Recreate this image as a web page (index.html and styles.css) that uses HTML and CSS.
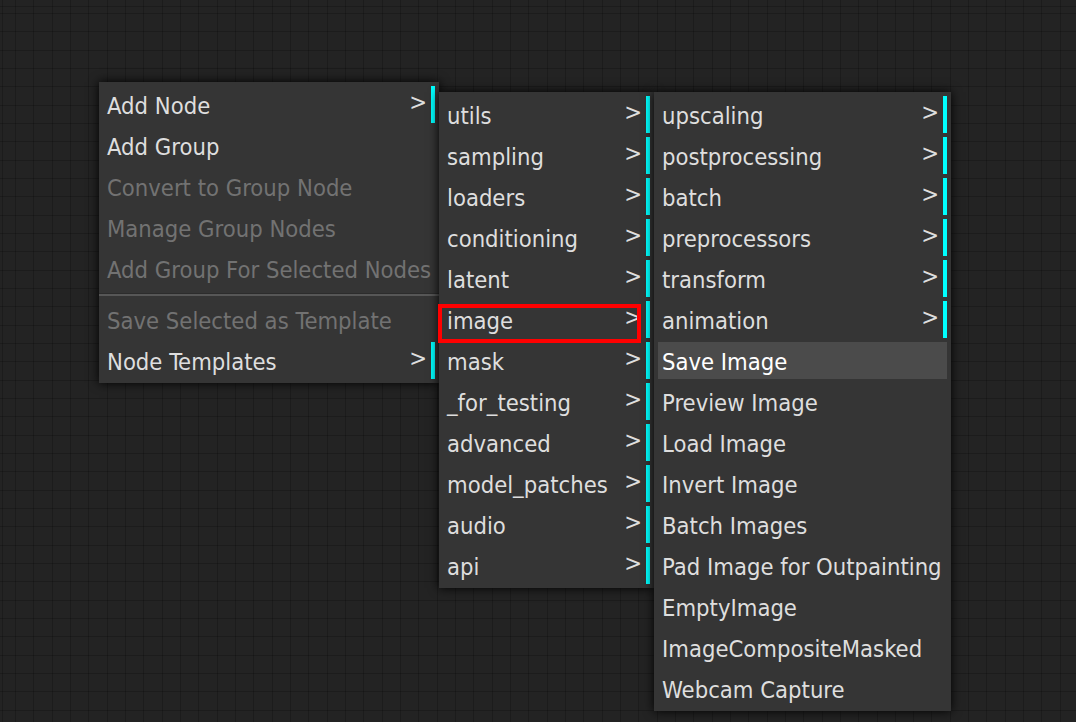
FILE: index.html
```html
<!DOCTYPE html>
<html lang="en">
<head>
<meta charset="utf-8">
<title>Context menu</title>
<link rel="stylesheet" href="styles.css">
</head>
<body>
<div class="canvas">
  <div class="menu menu-main">
    <div class="entry submenu">Add Node</div>
    <div class="entry">Add Group</div>
    <div class="entry disabled">Convert to Group Node</div>
    <div class="entry disabled">Manage Group Nodes</div>
    <div class="entry disabled">Add Group For Selected Nodes</div>
    <div class="separator"></div>
    <div class="entry disabled">Save Selected as Template</div>
    <div class="entry submenu">Node Templates</div>
  </div>

  <div class="menu menu-cats">
    <div class="entry submenu">utils</div>
    <div class="entry submenu">sampling</div>
    <div class="entry submenu">loaders</div>
    <div class="entry submenu">conditioning</div>
    <div class="entry submenu">latent</div>
    <div class="entry submenu">image</div>
    <div class="entry submenu">mask</div>
    <div class="entry submenu">_for_testing</div>
    <div class="entry submenu">advanced</div>
    <div class="entry submenu">model_patches</div>
    <div class="entry submenu">audio</div>
    <div class="entry submenu">api</div>
  </div>

  <div class="menu menu-image">
    <div class="entry submenu">upscaling</div>
    <div class="entry submenu">postprocessing</div>
    <div class="entry submenu">batch</div>
    <div class="entry submenu">preprocessors</div>
    <div class="entry submenu">transform</div>
    <div class="entry submenu">animation</div>
    <div class="entry hover">Save Image</div>
    <div class="entry">Preview Image</div>
    <div class="entry">Load Image</div>
    <div class="entry">Invert Image</div>
    <div class="entry">Batch Images</div>
    <div class="entry">Pad Image for Outpainting</div>
    <div class="entry">EmptyImage</div>
    <div class="entry">ImageCompositeMasked</div>
    <div class="entry">Webcam Capture</div>
  </div>

  <div class="highlight-box"></div>
</div>
</body>
</html>
```

FILE: styles.css
```css
html, body {
  margin: 0;
  padding: 0;
  background: #222222;
}

.canvas {
  position: relative;
  width: 1076px;
  height: 722px;
  overflow: hidden;
  background-color: #232323;
  background-image:
    repeating-linear-gradient(to right, rgba(0,0,0,0.2) 0, rgba(0,0,0,0.2) 1px, transparent 1px, transparent 18.33px),
    repeating-linear-gradient(to bottom, rgba(0,0,0,0.2) 0, rgba(0,0,0,0.2) 1px, transparent 1px, transparent 18.33px);
  background-position: 15px 13px, 15px 13px;
  font-family: "DejaVu Sans Condensed", "DejaVu Sans", sans-serif;
  font-size: 23.6px;
}

.menu {
  position: absolute;
  display: flex;
  flex-direction: column;
  gap: 4px;
  padding: 4px;
  box-sizing: border-box;
  background-color: #353535;
  box-shadow: 0 0 10px #000;
}

.menu-main {
  left: 99px;
  top: 82px;
  width: 340px;
  z-index: 1;
}

.menu-cats {
  left: 439px;
  top: 92px;
  width: 215px;
  z-index: 2;
}

.menu-image {
  left: 654px;
  top: 92px;
  width: 297px;
  z-index: 3;
}

.entry {
  position: relative;
  height: 37px;
  box-sizing: border-box;
  padding: 2px 0 0 4px;
  line-height: 37px;
  color: #dedede;
  white-space: nowrap;
}

.entry.submenu {
  border-right: 4px solid cyan;
}

.entry.submenu::after {
  content: ">";
  position: absolute;
  top: -2px;
  right: 4px;
  line-height: 37px;
  color: #dedede;
}

.entry.disabled {
  color: #727272;
}

.entry.hover {
  background-color: #4b4b4b;
  color: #ffffff;
}

.separator {
  height: 2px;
  margin: 2px -4px 1px;
  background-color: #575757;
  border-top: 1px solid #2c2c2c;
  box-sizing: content-box;
}

.highlight-box {
  position: absolute;
  left: 438px;
  top: 304px;
  width: 203px;
  height: 39px;
  box-sizing: border-box;
  border: 4px solid #ff0000;
  z-index: 4;
}
```
